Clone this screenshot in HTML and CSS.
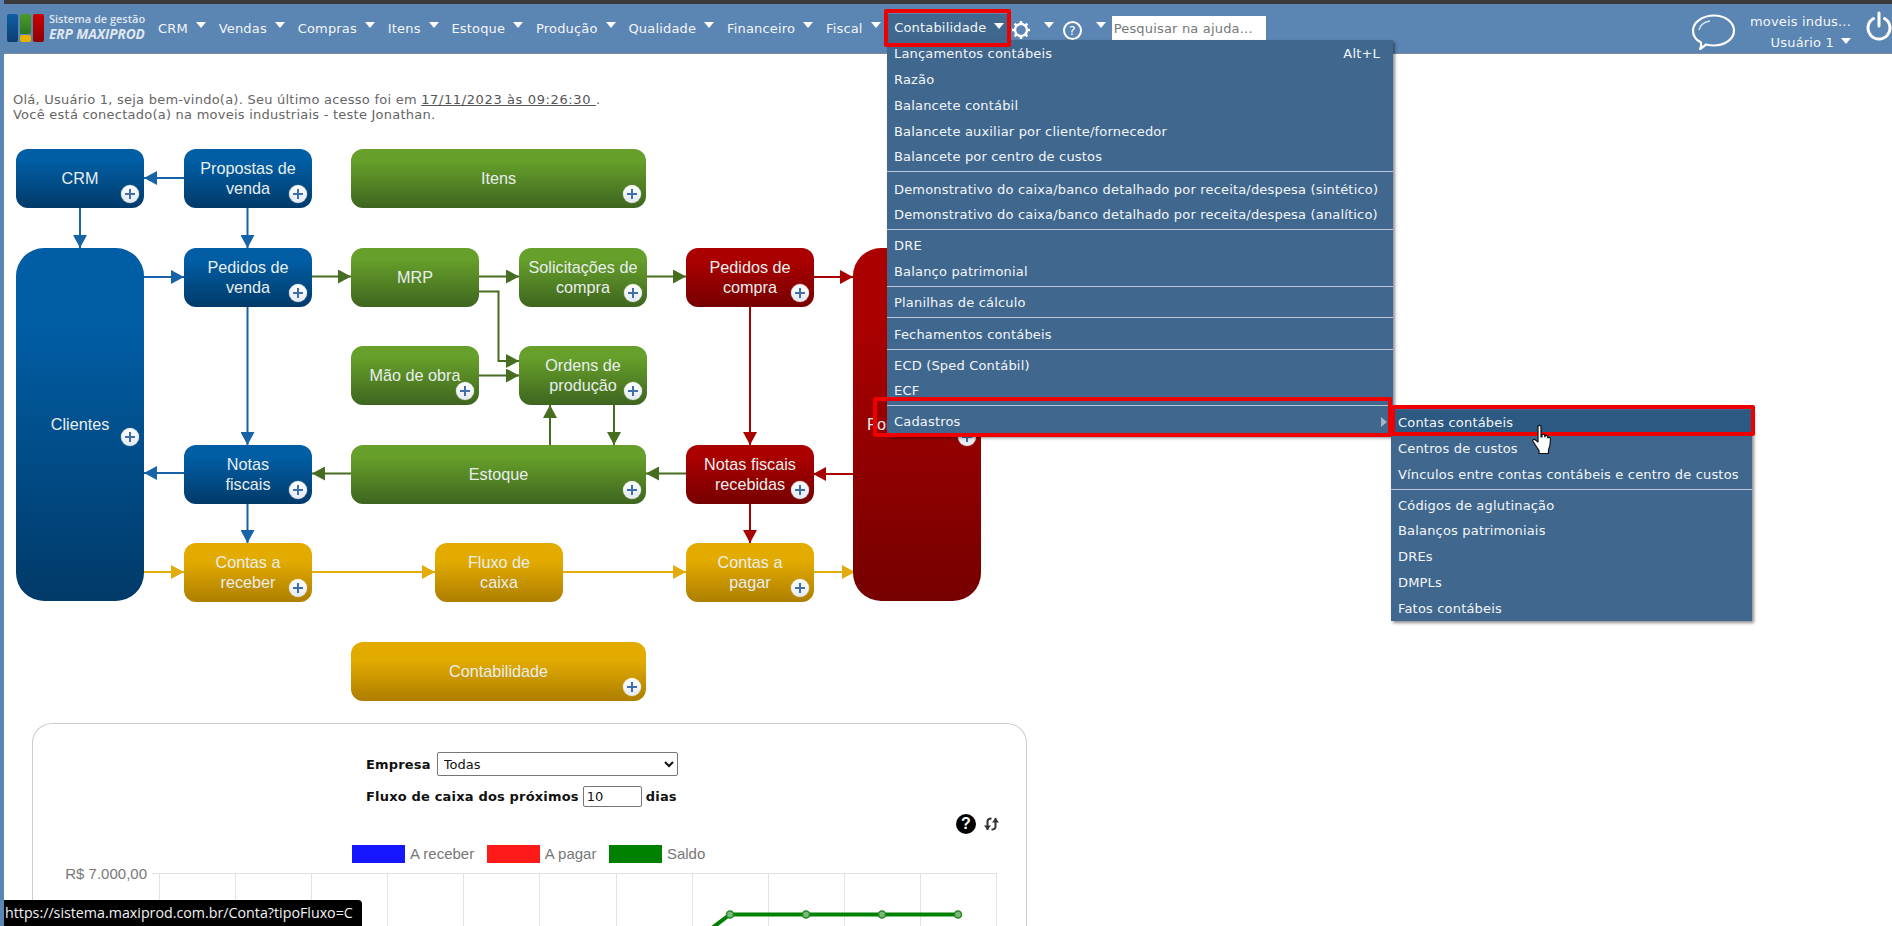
FILE: index.html
```html
<!DOCTYPE html>
<html lang="pt-BR">
<head>
<meta charset="utf-8">
<title>ERP Maxiprod</title>
<link rel="stylesheet" href="styles.css">
</head>
<body>
<div class="topbar"></div>
<header class="nav">
  <div class="logo">
    <div class="logo-mark"><span class="bar bar-blue"></span><span class="bar-col"><span class="bar bar-green"></span><span class="bar bar-yellow"></span></span><span class="bar bar-red"></span></div>
    <div class="logo-text"><span class="logo-a">Sistema de gestão</span><span class="logo-b">ERP MAXIPROD</span></div>
  </div>
  <nav class="nav-items">
    <a class="nav-item">CRM<i class="caret"></i></a>
    <a class="nav-item">Vendas<i class="caret"></i></a>
    <a class="nav-item">Compras<i class="caret"></i></a>
    <a class="nav-item">Itens<i class="caret"></i></a>
    <a class="nav-item">Estoque<i class="caret"></i></a>
    <a class="nav-item">Produção<i class="caret"></i></a>
    <a class="nav-item">Qualidade<i class="caret"></i></a>
    <a class="nav-item">Financeiro<i class="caret"></i></a>
    <a class="nav-item nav-item-last">Fiscal<i class="caret"></i></a>
    <a class="nav-item nav-active">Contabilidade<i class="caret"></i></a>
  </nav>
  <div class="nav-tools">
    <svg class="gear" width="20" height="20" viewBox="0 0 20 20"><circle cx="10" cy="10" r="6" fill="none" stroke="#fff" stroke-width="2.400"/><path d="M10 1v3M10 16v3M1 10h3M16 10h3M3.600 3.600l2.200 2.200M14.200 14.200l2.200 2.200M16.400 3.600l-2.200 2.200M5.800 14.200l-2.200 2.200" stroke="#fff" stroke-width="2.600"/></svg>
    <i class="caret caret-gear"></i>
    <span class="help"><span>?</span></span>
    <i class="caret caret-help"></i>
    <input class="search" type="text" placeholder="Pesquisar na ajuda...">
  </div>
  <div class="nav-right">
    <svg class="bubble" width="48" height="42" viewBox="0 0 48 42"><path d="M10 39c2-1 4-3 6-4.500 2.500.7 5 1 8 1 11 0 20-6.500 20-15S35 5.500 24 5.500 3 12 3 20.500c0 5 3 9.500 8 12 .5 2.500 0 4.500-1 6.500z" fill="none" stroke="#fff" stroke-width="2.200" stroke-linejoin="round"/><path d="M9 20c1-5 5-8 11-9" fill="none" stroke="#dfe8f2" stroke-width="1.300"/></svg>
    <div class="user"><span>moveis indus...</span><span class="user-name">Usuário 1<i class="caret caret-user"></i></span></div>
    <svg class="power" width="26" height="34" viewBox="0 0 26 34"><path d="M7.500 9.500a11 11 0 1 0 11 0" fill="none" stroke="#fff" stroke-width="3" stroke-linecap="round"/><path d="M13 4v13" stroke="#fff" stroke-width="3" stroke-linecap="round"/></svg>
  </div>
</header>

<main class="page">
  <p class="greet">Olá, Usuário 1, seja bem-vindo(a). Seu último acesso foi em <u>17/11/2023 às 09:26:30 </u>.<br>Você está conectado(a) na moveis industriais - teste Jonathan.</p>

  <section class="flow">
    <svg class="links" width="964" height="551" viewBox="16 149 964 551">
      <defs>
        <marker id="hb" markerUnits="userSpaceOnUse" markerWidth="13" markerHeight="14" refX="13" refY="7" orient="auto"><path d="M0 0L13 7L0 14z" fill="#1763a8"/></marker>
        <marker id="hg" markerUnits="userSpaceOnUse" markerWidth="13" markerHeight="14" refX="13" refY="7" orient="auto"><path d="M0 0L13 7L0 14z" fill="#466d20"/></marker>
        <marker id="hr" markerUnits="userSpaceOnUse" markerWidth="13" markerHeight="14" refX="13" refY="7" orient="auto"><path d="M0 0L13 7L0 14z" fill="#a80000"/></marker>
        <marker id="hy" markerUnits="userSpaceOnUse" markerWidth="13" markerHeight="14" refX="13" refY="7" orient="auto"><path d="M0 0L13 7L0 14z" fill="#e3ab0c"/></marker>
      </defs>
      <g class="l-blue" marker-end="url(#hb)">
        <path d="M184 178H144"/><path d="M80 208V248"/><path d="M247.500 208V248"/><path d="M144 277H184"/><path d="M247.500 307V445"/><path d="M184 473H144"/><path d="M247.500 504V543"/>
      </g>
      <g class="l-green" marker-end="url(#hg)">
        <path d="M312 276.500H351"/><path d="M479 276.500H519"/><path d="M646 276.500H686"/><path d="M479 291.500H498.500V361H519"/><path d="M479 375.500H519"/><path d="M550 445V405"/><path d="M614 405V445"/><path d="M686 473.500H646"/><path d="M351 473.500H312"/>
      </g>
      <g class="l-red" marker-end="url(#hr)">
        <path d="M813 277H853"/><path d="M750 307V445"/><path d="M853 474H813"/><path d="M750 503V543"/>
      </g>
      <g class="l-yellow" marker-end="url(#hy)">
        <path d="M144 572H184"/><path d="M312 572H435"/><path d="M562 572H686"/><path d="M813 572H855"/>
      </g>
    </svg>
    <div class="node blue n-crm">CRM<i class="plus"></i></div>
    <div class="node blue n-prop">Propostas de<br>venda<i class="plus"></i></div>
    <div class="node green n-itens">Itens<i class="plus"></i></div>
    <div class="node blue tall n-cli">Clientes<i class="plus plus-mid"></i></div>
    <div class="node blue n-ped">Pedidos de<br>venda<i class="plus"></i></div>
    <div class="node green n-mrp">MRP</div>
    <div class="node green n-sol">Solicitações de<br>compra<i class="plus"></i></div>
    <div class="node red n-pc">Pedidos de<br>compra<i class="plus"></i></div>
    <div class="node red tall n-for">Fornecedores<i class="plus plus-mid"></i></div>
    <div class="node green n-mao">Mão de obra<i class="plus"></i></div>
    <div class="node green n-op">Ordens de<br>produção<i class="plus"></i></div>
    <div class="node blue n-nf">Notas<br>fiscais<i class="plus"></i></div>
    <div class="node green n-est">Estoque<i class="plus"></i></div>
    <div class="node red n-nfr">Notas fiscais<br>recebidas<i class="plus"></i></div>
    <div class="node yellow n-cr">Contas a<br>receber<i class="plus"></i></div>
    <div class="node yellow n-fc">Fluxo de<br>caixa</div>
    <div class="node yellow n-cp">Contas a<br>pagar<i class="plus"></i></div>
    <div class="node yellow n-cont">Contabilidade<i class="plus"></i></div>
  </section>

  <section class="card">
    <form class="filters">
      <div class="filter-row"><label>Empresa</label><select class="sel"><option>Todas</option></select></div>
      <div class="filter-row filter-row2"><label>Fluxo de caixa dos próximos</label><input class="days" type="text" value="10"><label>dias</label></div>
    </form>
    <div class="tools">
      <span class="q">?</span>
      <svg width="17" height="14" viewBox="0 0 16 14"><path d="M4 13V4.500C4 2.500 5 1.500 8 1.500" fill="none" stroke="#333" stroke-width="2"/><path d="M0.500 8.500H7.500L4 13z" fill="#333"/><path d="M12 1v8.500c0 2-1 3-4 3" fill="none" stroke="#333" stroke-width="2"/><path d="M8.500 5.500H15.500L12 1z" fill="#333"/></svg>
    </div>
    <div class="legend">
      <i class="swatch s-blue"></i><span>A receber</span>
      <i class="swatch s-red"></i><span>A pagar</span>
      <i class="swatch s-green"></i><span>Saldo</span>
    </div>
    <svg class="chart" width="990" height="63" viewBox="33 863 990 63">
      <text class="axis" x="147" y="878.500" text-anchor="end">R$ 7.000,00</text>
      <path class="grid" d="M152 873.500H997M159.500 873V926M235.500 873V926M311.500 873V926M387.500 873V926M463.500 873V926M539.500 873V926M616.500 873V926M692.500 873V926M768.500 873V926M844.500 873V926M920.500 873V926M996.500 873V926"/>
      <path class="saldo" d="M700 937L730 914.500H958"/>
      <g class="dots"><circle cx="730" cy="914.500" r="3.500"/><circle cx="806" cy="914.500" r="3.500"/><circle cx="882" cy="914.500" r="3.500"/><circle cx="958" cy="914.500" r="3.500"/></g>
    </svg>
  </section>
</main>

<div class="menu">
  <a class="mi"><span>Lançamentos contábeis</span><span>Alt+L</span></a>
  <a class="mi">Razão</a>
  <a class="mi">Balancete contábil</a>
  <a class="mi">Balancete auxiliar por cliente/fornecedor</a>
  <a class="mi">Balancete por centro de custos</a>
  <hr class="sep sep-wide">
  <a class="mi">Demonstrativo do caixa/banco detalhado por receita/despesa (sintético)</a>
  <a class="mi">Demonstrativo do caixa/banco detalhado por receita/despesa (analítico)</a>
  <hr class="sep">
  <a class="mi">DRE</a>
  <a class="mi">Balanço patrimonial</a>
  <hr class="sep">
  <a class="mi">Planilhas de cálculo</a>
  <hr class="sep sep-wide">
  <a class="mi">Fechamentos contábeis</a>
  <hr class="sep">
  <a class="mi">ECD (Sped Contábil)</a>
  <a class="mi">ECF</a>
  <hr class="sep">
  <a class="mi mi-sub">Cadastros<i class="arrow-r"></i></a>
</div>

<div class="submenu">
  <a class="mi mi-on">Contas contábeis</a>
  <a class="mi">Centros de custos</a>
  <a class="mi">Vínculos entre contas contábeis e centro de custos</a>
  <hr class="sep">
  <a class="mi">Códigos de aglutinação</a>
  <a class="mi">Balanços patrimoniais</a>
  <a class="mi">DREs</a>
  <a class="mi">DMPLs</a>
  <a class="mi">Fatos contábeis</a>
</div>

<div class="mark mark-nav"></div>
<div class="mark mark-cad"></div>
<div class="mark mark-sub"></div>

<svg class="hand" width="22" height="32" viewBox="0 0 22 32"><path d="M7 2.500c0-1.500 3-1.500 3 0V13l1 0 0-2c0-1 2.500-1 2.500 0l.5 2 0-1c0-1 2.500-1 2.500 .3l.5 1.700c.3-1 2.500-.8 2.500.7 0 4-.5 8-2 11.300v3.500H8v-3c-2-3-4-6-6-9-1-1.500 1-3 2.500-1.500L7 18z" fill="#fff" stroke="#111" stroke-width="1.200" stroke-linejoin="round"/></svg>

<div class="status">https://sistema.maxiprod.com.br/Conta?tipoFluxo=C</div>
</body>
</html>
```
FILE: styles.css
```css
*{box-sizing:border-box}
html,body{margin:0;padding:0;height:926px;overflow:hidden;background:#fff}
body{font-family:"DejaVu Sans","Liberation Sans",sans-serif;font-size:13px;letter-spacing:.18px;border-left:4px solid #5b85b2;position:relative}
.topbar{height:4px;background:#3a3a3a;margin-left:-4px}
.nav{height:50px;background:#5b85b2;margin-left:-4px;display:flex;align-items:stretch;color:#f4f6f9;border-bottom:1px solid #7c8a99}
.logo{width:158px;padding-left:7px;display:flex;gap:5px;align-items:center;letter-spacing:0}
.logo-mark{display:flex;gap:2px;height:28px;margin-top:-2px}
.bar{display:block;width:11px;border-radius:2px}
.bar-blue{background:linear-gradient(#0f5da3,#0c3f73)}
.bar-red{background:linear-gradient(#c00,#8d0000)}
.bar-col{display:flex;flex-direction:column;gap:1px;width:11px}
.bar-green{flex:1;background:linear-gradient(#4c9a2c,#2c7a22)}
.bar-yellow{height:7px;background:#e8b000}
.logo-text{display:flex;flex-direction:column;font-family:"Open Sans","Liberation Sans",sans-serif;color:#dfe7f0;margin-top:-4px}
.logo-a{font-size:11px;font-weight:600;line-height:15px}
.logo-b{font-size:13.700px;font-weight:700;font-style:italic;line-height:16px;letter-spacing:-.1px;white-space:nowrap}
.nav-items{display:flex;align-items:stretch}
.nav-item{display:flex;align-items:center;margin-right:12.800px;white-space:nowrap}
.nav-item-last{margin-right:7px}
.caret{display:block;flex:none;width:0;height:0;border:5px solid transparent;border-bottom:0;border-top:6px solid #fff;margin-left:8px;margin-top:-7px}
.nav-active{background:#40688f;margin:10px 0 0;padding:6px 0 0 6.500px;width:122px;align-items:flex-start}
.nav-active .caret{margin-top:3px}
.nav-tools{display:flex;align-items:center;padding-left:1px}
.gear{margin-top:2px}
.caret-gear{margin-left:13px}
.help{display:flex;align-items:center;justify-content:center;width:19px;height:19px;border:2px solid #fff;border-radius:50%;margin-left:9px;margin-top:3px;font-size:13px;font-weight:normal;color:#fff}
.caret-help{margin-left:14px}
.search{width:154px;height:24px;margin:12px 0 0 6px;padding:0 2px;border:0;background:#fff;font:13px "DejaVu Sans",sans-serif;letter-spacing:.18px;color:#777;align-self:flex-start}
.search::placeholder{color:#777;opacity:1}
.nav-right{margin-left:auto;display:flex;align-items:flex-start}
.bubble{margin-top:6px}
.user{display:flex;flex-direction:column;align-items:flex-end;margin-left:12px;margin-right:15px;padding-top:7px;line-height:21px}
.user-name{display:flex;align-items:center}
.caret-user{margin-top:-4px;margin-left:7px}
.power{margin-top:5px}
.page{color:#666}
.greet{margin:37.500px 0 27.500px 9px;line-height:15px;color:#666;white-space:nowrap;letter-spacing:.24px}
.greet u{color:#555;letter-spacing:.62px}
.flow{position:relative;width:964px;height:551px;margin-left:12px}
.links{position:absolute;left:0;top:0}
.links g path{fill:none;stroke-width:2}
.l-blue path{stroke:#1763a8}
.l-green path{stroke:#466d20}
.l-red path{stroke:#a80000}
.l-yellow path{stroke:#e3ab0c}
.node{position:absolute;width:128px;height:59px;border-radius:12px;display:flex;align-items:center;justify-content:center;text-align:center;font:16.2px/20px "Liberation Sans",Arial,sans-serif;letter-spacing:0;color:#e9eeee;padding-bottom:2px}
.blue{background:linear-gradient(#015ea5 20%,#013a69)}
.green{background:linear-gradient(#669f2a 20%,#3e651f)}
.red{background:linear-gradient(#ab0000 20%,#760000)}
.yellow{background:linear-gradient(#e3ab00 30%,#ad7e00)}
.tall{height:353px;border-radius:28px;padding-bottom:2px}
.plus{position:absolute;right:5px;bottom:5px;width:18px;height:18px;border-radius:50%;background:linear-gradient(#fff,#e4eaf2);box-shadow:0 0 1px #fff}
.plus::before,.plus::after{content:"";position:absolute;background:#3f6ea8}
.plus::before{left:4px;top:8px;width:10px;height:2px}
.plus::after{left:8px;top:4px;width:2px;height:10px}
.plus-mid{bottom:auto;top:180px}
.n-crm{left:0;top:0}
.n-prop{left:168px;top:0}
.n-itens{left:335px;top:0;width:295px}
.n-cli{left:0;top:99px}
.n-ped{left:168px;top:99px}
.n-mrp{left:335px;top:99px}
.n-sol{left:503px;top:99px}
.n-pc{left:670px;top:99px}
.n-for{left:837px;top:99px}
.n-mao{left:335px;top:197px}
.n-op{left:503px;top:197px}
.n-nf{left:168px;top:296px}
.n-est{left:335px;top:296px;width:295px}
.n-nfr{left:670px;top:296px}
.n-cr{left:168px;top:394px}
.n-fc{left:419px;top:394px}
.n-cp{left:670px;top:394px}
.n-cont{left:335px;top:493px;width:295px}
.card{margin:23px 0 0 28px;width:995px;height:203px;border:1px solid #ccc;border-bottom:0;border-radius:20px 20px 0 0;padding-top:28px;color:#222}
.filters{margin-left:333px;width:312px;font-weight:bold;color:#111}
.filter-row{display:flex;align-items:center;gap:6px;height:24px;white-space:nowrap}
.filter-row2{margin-top:10px;gap:4px;height:21px}
.sel{width:241px;height:24px;background:#fff;border:1px solid #767676;border-radius:2px;font:13px "DejaVu Sans",sans-serif;color:#111;padding:0 0 0 2px}
.days{width:59px;height:21px;border:1px solid #767676;border-radius:2px;padding:0 3px;font:13px "DejaVu Sans",sans-serif;color:#111}
.tools{display:flex;justify-content:flex-end;align-items:center;gap:7px;padding-right:26px;margin-top:8px;height:18px}
.q{display:flex;width:20px;height:20px;border-radius:50%;background:#000;color:#fff;font:bold 16px/20px "Liberation Sans",sans-serif;letter-spacing:0;justify-content:center}
.legend{display:flex;align-items:center;margin:12px 0 0 319px;height:18px;font:15px "Liberation Sans",sans-serif;letter-spacing:0;color:#777}
.swatch{display:block;width:53px;height:18px;margin-right:5px}
.s-blue{background:#1616ff}
.s-red{background:#ff1a1a}
.s-green{background:#008000}
.legend span{margin:-2px 12.500px 0 0}
.chart{display:block}
.axis{font:15px "Liberation Sans",sans-serif;letter-spacing:0;fill:#777}
.grid{fill:none;stroke:#e2e2e2;stroke-width:1}
.saldo{fill:none;stroke:#008000;stroke-width:4}
.dots circle{fill:#7cb87c;stroke:#228b22;stroke-width:1.500}
.menu,.submenu{position:absolute;background:#40688f;color:#f3f6f9;box-shadow:2px 2px 3px rgba(0,0,0,.45);white-space:nowrap;padding-top:1px}
.menu{left:883px;top:40px;width:506px;height:396px}
.submenu{left:1387px;top:409px;width:361px;height:212px}
.mi{display:flex;justify-content:space-between;align-items:center;height:25.750px;padding:0 13px 0 7px;position:relative}
.sep{margin:1.500px 0 2.600px;border:0;height:1px;background:#b9c9da}
.sep-wide{margin-bottom:3.900px}
.arrow-r{position:absolute;right:6px;top:8px;width:0;height:0;border:5px solid transparent;border-right:0;border-left:6px solid #a9b6c4}
.mi-on{background:#2d5a82}
.mark{position:absolute;border:4px solid #ee0000;border-radius:2px}
.mark-nav{left:880px;top:9px;width:127px;height:38px}
.mark-cad{left:869px;top:397px;width:519px;height:40px}
.mark-sub{left:1387px;top:405px;width:364px;height:31px}
.hand{position:absolute;left:1527px;top:424px}
.status{position:absolute;left:-4px;top:900px;width:362px;height:26px;background:#000;color:#f2f2f2;border-radius:0 4px 0 0;font:14.250px/26px "Open Sans","Liberation Sans",sans-serif;letter-spacing:0;padding-left:5px;white-space:nowrap}
```
